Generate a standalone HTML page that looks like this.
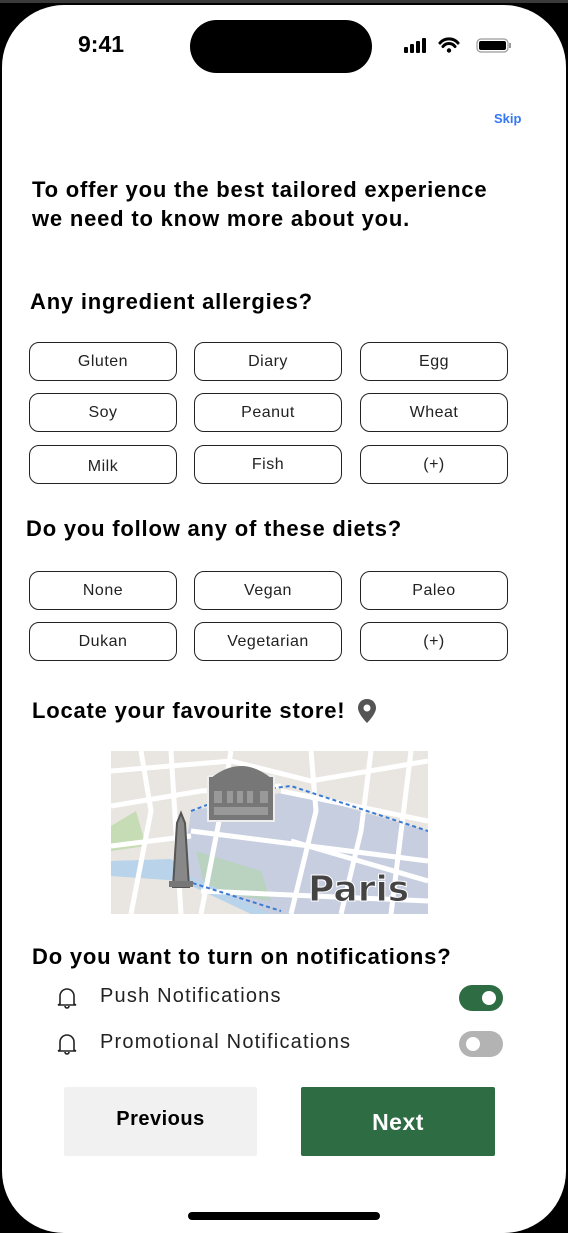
<!DOCTYPE html>
<html><head><meta charset="utf-8"><style>
*{margin:0;padding:0;box-sizing:border-box}
body{width:568px;height:1232px;background:#000;position:relative;overflow:hidden;font-family:"Liberation Sans",sans-serif}
.topline{position:absolute;left:0;top:0;width:568px;height:3px;background:#3a3a3a}
.screen{position:absolute;left:2px;top:5px;width:564px;height:1228px;background:#fff;border-radius:62px}
.a{position:absolute}
.chip{position:absolute;width:148px;height:39px;border:1px solid #222;border-radius:10px;font-size:16px;letter-spacing:0.5px;color:#222;text-align:center;line-height:37px}
h2{position:absolute;font-size:22px;letter-spacing:0.8px;font-weight:bold;color:#000;white-space:nowrap}
.notif{position:absolute;left:100px;font-size:20px;letter-spacing:1.2px;color:#222}
</style></head><body>
<div class="topline"></div>
<div class="screen"></div>
<div class="a" style="left:78px;top:31px;font-size:23px;font-weight:bold;color:#000">9:41</div>
<div class="a" style="left:190px;top:20px;width:182px;height:53px;background:#000;border-radius:27px"></div>
<svg class="a" style="left:404px;top:37px" width="120" height="18">
<rect x="0" y="10" width="4" height="6" rx="1"/><rect x="6" y="7" width="4" height="9" rx="1"/><rect x="12" y="4" width="4" height="12" rx="1"/><rect x="18" y="1" width="4" height="15" rx="1"/>
<path d="M36 6a12 12 0 0 1 18 0M39 9.5a7.5 7.5 0 0 1 12 0" stroke="#000" stroke-width="3" fill="none" stroke-linecap="round"/><circle cx="45" cy="13.5" r="2.2"/>
<rect x="73" y="2" width="31" height="13" rx="4" fill="none" stroke="#999" stroke-width="1.2"/><rect x="75" y="4" width="27" height="9" rx="2"/><rect x="105" y="6" width="2" height="5" fill="#999"/>
</svg>
<div class="a" style="left:494px;top:111px;font-size:13px;font-weight:bold;color:#3478f6">Skip</div>
<div class="a" style="left:32px;top:175px;font-size:22px;letter-spacing:0.8px;font-weight:bold;line-height:29px;color:#000;white-space:nowrap">To offer you the best tailored experience<br>we need to know more about you.</div>
<h2 style="left:30px;top:289px">Any ingredient allergies?</h2>
<div class="chip" style="left:29px;top:342px">Gluten</div><div class="chip" style="left:194px;top:342px">Diary</div><div class="chip" style="left:360px;top:342px">Egg</div>
<div class="chip" style="left:29px;top:393px">Soy</div><div class="chip" style="left:194px;top:393px">Peanut</div><div class="chip" style="left:360px;top:393px">Wheat</div>
<div class="chip" style="left:29px;top:445px;line-height:41px">Milk</div><div class="chip" style="left:194px;top:445px">Fish</div><div class="chip" style="left:360px;top:445px">(+)</div>
<h2 style="left:26px;top:516px">Do you follow any of these diets?</h2>
<div class="chip" style="left:29px;top:571px">None</div><div class="chip" style="left:194px;top:571px">Vegan</div><div class="chip" style="left:360px;top:571px">Paleo</div>
<div class="chip" style="left:29px;top:622px">Dukan</div><div class="chip" style="left:194px;top:622px">Vegetarian</div><div class="chip" style="left:360px;top:622px">(+)</div>
<h2 style="left:32px;top:698px">Locate your favourite store!</h2>
<svg class="a" style="left:356px;top:698px" width="22" height="26" viewBox="0 0 22 26"><path d="M11 1C5.5 1 2 5 2 10c0 6 9 15 9 15s9-9 9-15c0-5-3.5-9-9-9z" fill="#555"/><circle cx="11" cy="10" r="3.5" fill="#fff"/></svg>
<svg class="a" style="left:111px;top:751px" width="317" height="163" viewBox="0 0 317 163">
<rect width="317" height="163" fill="#e9e6e1"/>
<path d="M80 60 L180 40 L317 80 L317 163 L160 163 L70 130 Z" fill="#c7cee0"/>
<path d="M85 100 L150 120 L160 150 L95 140 Z" fill="#b9d3c0"/>
<path d="M0 75 L25 60 L35 95 L0 100 Z" fill="#c6dcb5"/>
<path d="M0 110 L60 108 L80 125 L160 163 L140 163 L70 130 L0 125 Z" fill="#b8d3ea"/>
<g stroke="#fff" stroke-width="5" fill="none">
<path d="M0 20 L120 10 L200 30 L317 10"/><path d="M0 55 L90 40 L170 35"/><path d="M60 0 L70 163"/><path d="M30 0 L40 60 L20 163"/>
<path d="M120 0 L110 60 L90 163"/><path d="M200 0 L205 60 L180 163"/><path d="M260 0 L250 80 L230 163"/><path d="M300 0 L280 163"/>
<path d="M80 80 L317 110"/><path d="M90 140 L317 150"/><path d="M170 40 L317 70"/><path d="M0 95 L80 85"/><path d="M180 90 L317 130"/>
</g>
<path d="M80 60 Q130 40 180 35 L317 80" stroke="#3a7bd5" stroke-width="2" stroke-dasharray="4 3" fill="none"/>
<path d="M75 130 L170 160" stroke="#3a7bd5" stroke-width="2" stroke-dasharray="4 3" fill="none"/>
<rect x="97" y="25" width="66" height="45" fill="#777" stroke="#eee" stroke-width="2"/>
<path d="M100 27 Q130 3 160 27Z" fill="#777"/>
<g fill="#999"><rect x="103" y="40" width="8" height="12"/><rect x="116" y="40" width="6" height="12"/><rect x="126" y="40" width="6" height="12"/><rect x="136" y="40" width="6" height="12"/><rect x="149" y="40" width="8" height="12"/><rect x="103" y="56" width="54" height="8"/></g>
<path d="M62 136 L66 72 L70 62 L74 72 L78 136Z" fill="#888" stroke="#555" stroke-width="2"/><rect x="58" y="130" width="24" height="6" fill="#777"/>
<text x="197" y="150" font-family="DejaVu Sans,sans-serif" font-weight="bold" font-size="36" fill="#444" stroke="#fff" stroke-width="1">Paris</text>
</svg>
<h2 style="left:32px;top:944px">Do you want to turn on notifications?</h2>
<svg class="a" style="left:55px;top:986px" width="24" height="24" viewBox="0 0 24 24"><path d="M5 18V10a7 7 0 0 1 14 0v8l2 1H3zM10 20a2 2 0 0 0 4 0" stroke="#222" stroke-width="1.6" fill="none"/></svg>
<div class="notif" style="top:985px">Push Notifications</div>
<div class="a" style="left:459px;top:985px;width:44px;height:26px;border-radius:13px;background:#2e6d44"></div><div class="a" style="left:482px;top:991px;width:14px;height:14px;border-radius:7px;background:#fff"></div>
<svg class="a" style="left:55px;top:1032px" width="24" height="24" viewBox="0 0 24 24"><path d="M5 18V10a7 7 0 0 1 14 0v8l2 1H3zM10 20a2 2 0 0 0 4 0" stroke="#222" stroke-width="1.6" fill="none"/></svg>
<div class="notif" style="top:1031px">Promotional Notifications</div>
<div class="a" style="left:459px;top:1031px;width:44px;height:26px;border-radius:13px;background:#b3b3b3"></div><div class="a" style="left:466px;top:1037px;width:14px;height:14px;border-radius:7px;background:#fff"></div>
<div class="a" style="left:64px;top:1087px;width:193px;height:69px;background:#f1f1f1;border-radius:2px;font-size:20px;letter-spacing:0.5px;font-weight:bold;color:#000;text-align:center;line-height:64px">Previous</div>
<div class="a" style="left:301px;top:1087px;width:194px;height:69px;background:#2e6d44;border-radius:2px;font-size:23px;letter-spacing:0.5px;font-weight:bold;color:#fff;text-align:center;line-height:70px">Next</div>
<div class="a" style="left:188px;top:1212px;width:192px;height:8px;border-radius:4px;background:#000"></div>
</body></html>
